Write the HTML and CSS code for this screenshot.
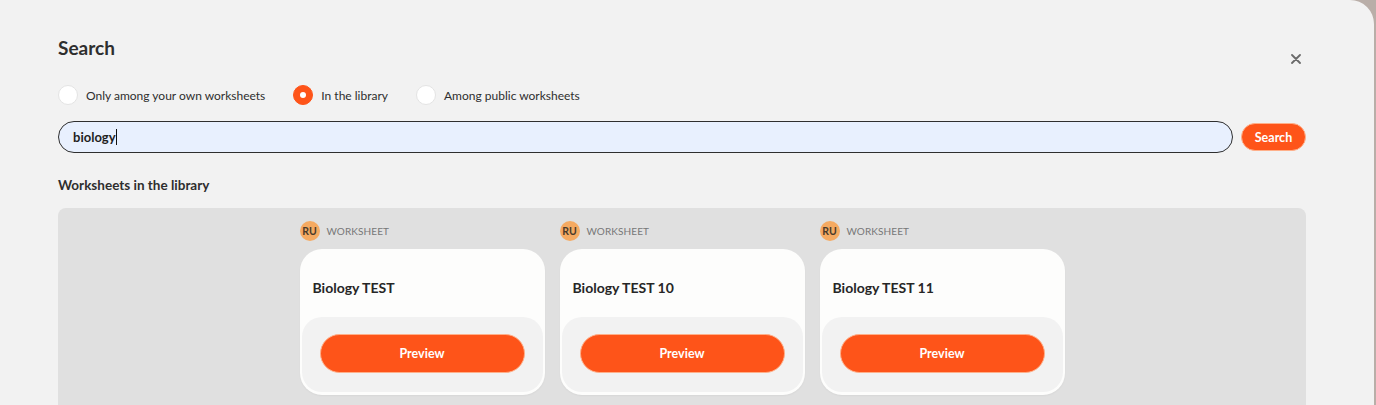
FILE: index.html
```html
<!DOCTYPE html>
<html>
<head>
<meta charset="utf-8">
<link rel="stylesheet" href="styles.css">
</head>
<body>
<div class="modal">
  <h1 class="title">Search</h1>
  <button class="close" aria-label="Close">
    <svg width="10" height="10" viewBox="0 0 10 10"><path d="M1 1 L9 9 M9 1 L1 9" stroke="#6a6a6a" stroke-width="1.8" stroke-linecap="round"/></svg>
  </button>
  <div class="radios">
    <label class="radio"><span class="dot"></span><span>Only among your own worksheets</span></label>
    <label class="radio checked"><span class="dot"></span><span>In the library</span></label>
    <label class="radio"><span class="dot"></span><span>Among public worksheets</span></label>
  </div>
  <div class="search-row">
    <div class="input"><span>biology</span><span class="caret"></span></div>
    <button class="search-btn">Search</button>
  </div>
  <h2 class="section">Worksheets in the library</h2>
  <div class="panel">
    <div class="cards">
      <div class="item">
        <div class="meta"><span class="lang">RU</span><span class="kind">WORKSHEET</span></div>
        <div class="card">
          <div class="card-title">Biology TEST</div>
          <div class="card-foot"><button class="preview">Preview</button></div>
        </div>
      </div>
      <div class="item">
        <div class="meta"><span class="lang">RU</span><span class="kind">WORKSHEET</span></div>
        <div class="card">
          <div class="card-title">Biology TEST 10</div>
          <div class="card-foot"><button class="preview">Preview</button></div>
        </div>
      </div>
      <div class="item">
        <div class="meta"><span class="lang">RU</span><span class="kind">WORKSHEET</span></div>
        <div class="card">
          <div class="card-title">Biology TEST 11</div>
          <div class="card-foot"><button class="preview">Preview</button></div>
        </div>
      </div>
    </div>
  </div>
</div>
</body>
</html>
```

FILE: styles.css
```css
* { box-sizing: border-box; }
html, body { margin: 0; padding: 0; }
body {
  background: #b9aea8;
  font-family: Lato, "Open Sans", sans-serif;
  color: #2b2b2b;
  height: 405px;
  overflow: hidden;
}
.modal {
  position: relative;
  width: 1374px;
  min-height: 420px;
  background: #f2f2f2;
  border-top-right-radius: 24px;
  padding: 36px 68px 0 58px;
}
.title {
  margin: 0;
  font-size: 19px;
  line-height: 24px;
  font-weight: 700;
  color: #2e2e2e;
}
.close {
  position: absolute;
  top: 54px;
  right: 73px;
  border: 0;
  background: none;
  padding: 0;
  width: 10px;
  height: 10px;
  display: flex;
}
.radios {
  display: flex;
  align-items: center;
  margin-top: 25px;
  gap: 28px;
}
.radio {
  display: flex;
  align-items: center;
  gap: 8px;
  font-size: 12px;
  color: #2e2e2e;
}
.dot {
  width: 20px;
  height: 20px;
  border-radius: 50%;
  background: #fff;
  border: 1px solid #e4e4e4;
  display: flex;
  align-items: center;
  justify-content: center;
}
.radio.checked .dot {
  background: #fe5419;
  border-color: #fe5419;
}
.radio.checked .dot::after {
  content: "";
  width: 6px;
  height: 6px;
  border-radius: 50%;
  background: #fff;
}
.search-row {
  display: flex;
  align-items: center;
  gap: 8px;
  margin-top: 16px;
}
.input {
  flex: 1;
  height: 32px;
  border: 1.5px solid #2f2f2f;
  border-radius: 16px;
  background: #e8f0fe;
  display: flex;
  align-items: center;
  padding-left: 14px;
  font-size: 13px;
  font-weight: 700;
  color: #1f1f1f;
}
.caret {
  width: 1px;
  height: 16px;
  background: #111;
}
.search-btn {
  width: 65px;
  height: 28px;
  border-radius: 14px;
  border: 1.5px solid #ffb08a;
  background: #fe5419;
  color: #fff;
  font-family: inherit;
  font-size: 12.5px;
  font-weight: 700;
  padding: 0;
}
.section {
  margin: 23px 0 0;
  font-size: 13.5px;
  line-height: 18px;
  font-weight: 700;
  color: #2e2e2e;
}
.panel {
  margin-top: 14px;
  background: #e0e0e0;
  border-radius: 8px;
  height: 220px;
  padding-top: 13px;
}
.cards {
  display: flex;
  justify-content: center;
  gap: 15px;
}
.item { width: 245px; }
.meta {
  display: flex;
  align-items: center;
  gap: 7px;
  height: 20px;
}
.lang {
  width: 20px;
  height: 20px;
  border-radius: 50%;
  background: #f5aa62;
  font-size: 10.5px;
  font-weight: 700;
  color: #4a3a2a;
  display: flex;
  align-items: center;
  justify-content: center;
}
.kind {
  font-size: 10px;
  color: #777;
  letter-spacing: 0.1px;
}
.card {
  margin-top: 8px;
  height: 146px;
  background: #fdfdfc;
  border-radius: 22px;
  padding: 0 2px 3px;
  display: flex;
  flex-direction: column;
  box-shadow: 0 1px 2px rgba(0,0,0,0.04);
}
.card-title {
  height: 68px;
  padding: 30px 0 0 11px;
  font-size: 14px;
  font-weight: 700;
  color: #262626;
}
.card-foot {
  flex: 1;
  background: #f2f2f2;
  border-radius: 20px;
  display: flex;
  align-items: center;
  justify-content: center;
  padding-bottom: 2px;
}
.preview {
  width: 205px;
  height: 39px;
  border-radius: 20px;
  border: 1.5px solid #ffb08a;
  background: #fe5419;
  color: #fff;
  font-family: inherit;
  font-size: 12.5px;
  font-weight: 700;
}
```
